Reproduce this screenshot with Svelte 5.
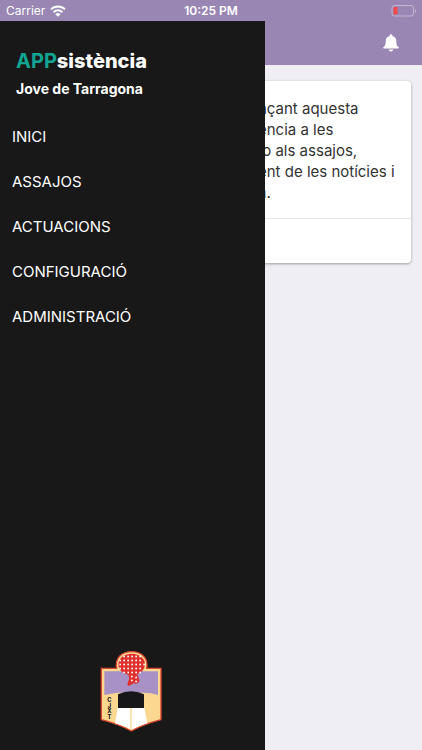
<script>
    const menu = [
        "INICI",
        "ASSAJOS",
        "ACTUACIONS",
        "CONFIGURACIÓ",
        "ADMINISTRACIÓ",
    ];

    const lines = [
        "nçant aquesta",
        "ència a les",
        "\u00a0o als assajos,",
        "ent de les notícies i",
        "a.",
    ];

    // dots of the scarf
    const dots = [];
    for (let y = 49; y <= 100; y += 12) {
        for (let x = 90; x <= 165; x += 12) {
            if (Math.hypot(x - 125, y - 72) < 38) dots.push({ x, y });
        }
    }
    dots.push({ x: 125, y: 109 }, { x: 138, y: 112 }, { x: 125, y: 121 }, { x: 138, y: 124 });
</script>

<div class="app">
    <div class="status">
        <div class="carrier">
            <span>Carrier</span>
            <svg width="16" height="12" viewBox="0 0 16 12" fill="none" stroke="#fff" stroke-width="2">
                <path d="M1 4.4a10 10 0 0 1 14 0" />
                <path d="M3.6 7.2a6.2 6.2 0 0 1 8.8 0" />
                <path d="M8 11.8 5.4 9.2a3.7 3.7 0 0 1 5.2 0z" fill="#fff" stroke="none" />
            </svg>
        </div>
        <time>10:25 PM</time>
        <div class="battery">
            <svg width="26" height="12" viewBox="0 0 26 12">
                <rect x="2" y="0.5" width="21.5" height="10.5" rx="2.5" fill="none" stroke="#c3b7d2" />
                <rect x="3.5" y="2" width="4" height="7.5" rx="1" fill="#f5484a" />
                <path d="M25 4v3.8c1.6-.6 1.6-3.2 0-3.8z" fill="#c3b7d2" />
            </svg>
        </div>
    </div>

    <div class="body">
        <aside class="drawer">
            <header>
                <h1><span>APP</span>sistència</h1>
                <p>Jove de Tarragona</p>
            </header>
            <nav>
                {#each menu as item}
                    <a href="#{item.toLowerCase()}">{item}</a>
                {/each}
            </nav>
            <svg class="crest" width="62" height="83" viewBox="30 30 186 249" role="img" aria-label="CJXT">
                <path
                    d="M34 85H80C74 55 94 35 125 35S176 55 170 85H213V239C194 244 150 258 124 273C98 258 54 244 34 239Z"
                    fill="#fbd78f"
                    stroke="#d9442f"
                    stroke-width="4"
                />
                <path d="M43 94H204V165Q183 158 162 158H84Q63 160 43 165Z" fill="#a892c5" />
                <path d="M84 163Q124 145 162 163V204H84Z" fill="#17171a" />
                <path d="M83 204H121V268C106 260 92 255 75 250Z" fill="#fff" />
                <path d="M125 204H163L172 250C156 255 141 261 125 269Z" fill="#fff" />
                <ellipse cx="125" cy="73" rx="40" ry="32" fill="#df302d" />
                <path
                    d="M113 100C119 110 118 119 115 124C111 130 112 134 115 138L127 133L132 128C138 134 143 132 148 124C149 116 144 109 140 98Z"
                    fill="#df302d"
                />
                {#each dots as dot}
                    <rect x={dot.x - 2} y={dot.y - 2} width="5" height="5" fill="#fff" />
                {/each}
                <text class="initials" text-anchor="middle">
                    <tspan x="58" y="186">C</tspan><tspan x="58" y="203">J</tspan><tspan x="58" y="220">X</tspan><tspan x="58" y="237">T</tspan>
                </text>
            </svg>
        </aside>

        <main>
            <div class="toolbar">
                <button aria-label="Notificacions">
                    <svg width="16" height="18" viewBox="0 0 16 18" fill="#fff">
                        <path d="M8 .3c.8 0 1.3.5 1.3 1.3v.4c2.6.6 4 2.6 4 5.2 0 3.6.7 4.8 2.1 5.9.7.6.4 1.500-.5 1.500H1.100c-.9 0-1.200-.9-.5-1.500 1.400-1.100 2.100-2.300 2.100-5.900 0-2.600 1.400-4.600 4-5.200v-.4C6.700.8 7.200.3 8 .3z" />
                        <path d="M5.800 15.600h4.400c-.2 1.200-1 2-2.200 2s-2-.8-2.200-2z" />
                    </svg>
                </button>
            </div>
            <article class="card">
                <p>
                    {#each lines as line}
                        <span>{line}</span>
                    {/each}
                </p>
                <footer></footer>
            </article>
        </main>
    </div>
</div>

<style>
    :global(body) {
        margin: 0;
    }
    .app {
        min-height: 100vh;
        display: flex;
        flex-direction: column;
        font-family: Inter, "Liberation Sans", sans-serif;
        background: #efeef5;
    }
    .status {
        display: flex;
        align-items: center;
        height: 21px;
        padding: 0 6px;
        box-sizing: border-box;
        background: #9986b3;
        color: #fff;
        font-size: 12px;
        line-height: 21px;
    }
    .carrier,
    .battery {
        flex: 1;
        display: flex;
        align-items: center;
        gap: 5px;
    }
    .battery {
        justify-content: flex-end;
    }
    time {
        font-weight: 600;
    }
    .body {
        flex: 1;
        display: flex;
    }
    .drawer {
        position: relative;
        z-index: 1;
        width: 265px;
        flex-shrink: 0;
        display: flex;
        flex-direction: column;
        background: #181818;
        color: #fff;
    }
    .drawer header {
        padding: 28px 16px 15px;
    }
    h1 {
        margin: 0;
        font-size: 20px;
        line-height: 24px;
        font-weight: 800;
    }
    h1 span {
        color: #12a594;
        font-weight: 700;
    }
    .drawer p {
        margin: 6px 0 0;
        font-size: 14px;
        line-height: 20px;
        font-weight: 700;
    }
    nav {
        display: flex;
        flex-direction: column;
    }
    nav a {
        padding: 0 12px;
        color: #fff;
        font-size: 15px;
        line-height: 45px;
        text-decoration: none;
    }
    .crest {
        margin: auto auto 17px 100px;
    }
    .initials {
        font-size: 17px;
        font-weight: 800;
        fill: #17171a;
    }
    main {
        flex: 1;
        min-width: 0;
        overflow: hidden;
    }
    .toolbar {
        display: flex;
        align-items: center;
        justify-content: flex-end;
        height: 44px;
        padding: 0 23px;
        background: #9986b3;
    }
    button {
        display: flex;
        padding: 0;
        border: 0;
        background: none;
    }
    /* the card runs on under the open drawer */
    .card {
        margin: 16px 11px 0 -8px;
        border-radius: 4px;
        background: #fff;
        box-shadow: 0 1px 3px rgba(0, 0, 0, 0.35);
        color: #333;
    }
    .card p {
        margin: 0;
        padding: 17px 0 15px 1px;
        font-size: 15px;
        line-height: 21px;
        white-space: nowrap;
    }
    .card span {
        display: block;
    }
    .card footer {
        height: 44px;
        border-top: 1px solid #e6e6e8;
    }
</style>
